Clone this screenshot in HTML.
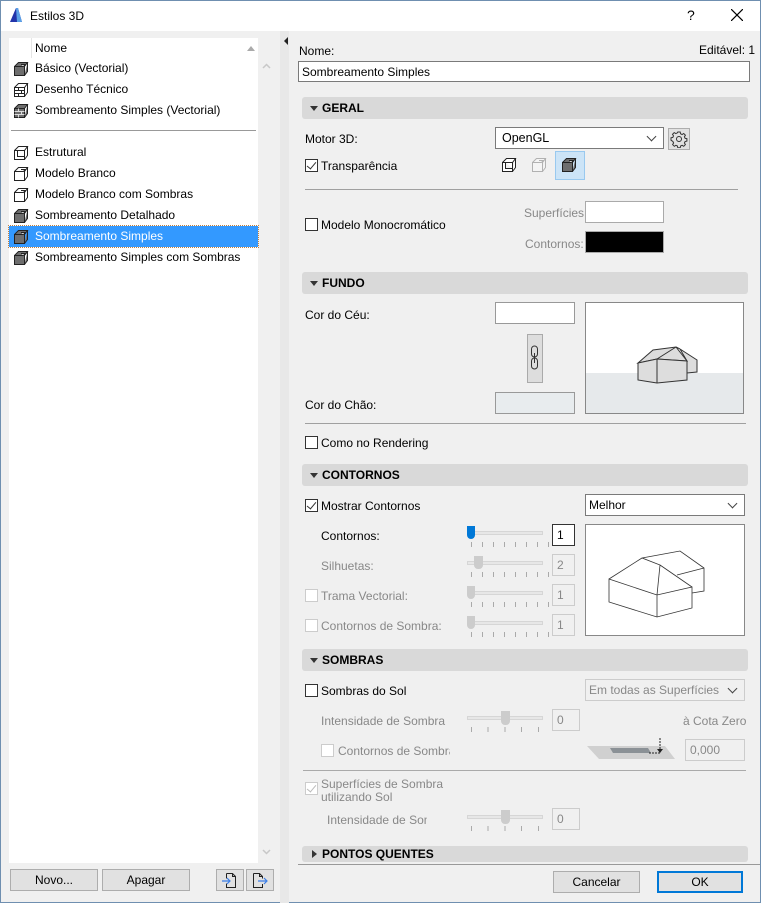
<!DOCTYPE html>
<html><head><meta charset="utf-8">
<style>
*{box-sizing:border-box;margin:0;padding:0}
body{width:761px;height:903px;background:#f0f0f0;font-family:"Liberation Sans",sans-serif;font-size:12px;color:#000;position:relative;overflow:hidden}
.a{position:absolute;white-space:nowrap}
.win{position:absolute;left:0;top:0;width:761px;height:903px;border:1px solid #6f8fb0;}
.title{position:absolute;left:1px;top:1px;width:759px;height:30px;background:#fff}
.list{position:absolute;left:9px;top:38px;width:249px;height:825px;background:#fff}
.row{position:absolute;left:0;width:249px;height:21px;line-height:21px;padding-left:26px}
.row svg{position:absolute;left:4px;top:3px}
.sel{background:#3399ff;color:#fff;outline:1px dotted #c08040}
.hdr{position:absolute;left:302px;width:446px;height:22px;background:#d9d9d9;border-radius:3px;font-weight:bold;line-height:22px;padding-left:20px}
.hdr:before{content:"";position:absolute;left:8px;top:9px;border-left:4px solid transparent;border-right:4px solid transparent;border-top:5px solid #333}
.hdr.c:before{left:10px;top:4px;border-top:4px solid transparent;border-bottom:4px solid transparent;border-left:5px solid #333;border-right:0}
.cb{position:absolute;width:13px;height:13px;border:1px solid #333;background:#fff}
.cb.d{border-color:#ccc}
.cb.k:after{content:"";position:absolute;left:3px;top:0px;width:4px;height:8px;border:solid #333;border-width:0 1.5px 1.5px 0;transform:rotate(40deg)}
.cb.kd:after{border-color:#bbb}
.box{position:absolute;background:#fff;border:1px solid #7a7a7a}
.box.d{background:#f0f0f0;border-color:#ccc;color:#888}
.btn{position:absolute;background:#e1e1e1;border:1px solid #adadad;text-align:center;line-height:20px}
.g{color:#888}
.sl{position:absolute;height:4px;background:#e7e7e7;border:1px solid #d6d6d6}
.ticks{position:absolute;height:5px;background:repeating-linear-gradient(90deg,#aaa 0 1px,transparent 1px 11px)}
.hr{position:absolute;height:1px;background:#a0a0a0}
.dd:after{content:"";position:absolute;right:8px;top:5px;width:6px;height:6px;border:solid #444;border-width:0 1px 1px 0;transform:rotate(45deg)}
</style></head><body>
<svg width="0" height="0" style="position:absolute">
<defs>
<symbol id="cube" viewBox="0 0 16 16"><path d="M1.5 5.5h10v9h-10z M1.5 5.5l4-4h9l-3 4 M14.5 1.5v9l-3 4" fill="#6e6e6e" stroke="#222" stroke-width="1"/><path d="M8 3.5h4l-1.5 2" fill="#fff" stroke="#222"/></symbol>
<symbol id="cubew" viewBox="0 0 16 16"><path d="M1.5 5.5h10v9h-10z M1.5 5.5l4-4h9l-3 4 M14.5 1.5v9l-3 4" fill="#fff" stroke="#222" stroke-width="1"/><path d="M8 3.5h4l-1.5 2" fill="#fff" stroke="#222"/></symbol>
<symbol id="brick" viewBox="0 0 16 16"><path d="M1.5 5.5h10v9h-10z M1.5 5.5l4-4h9l-3 4 M14.5 1.5v9l-3 4 M1.5 8.5h10M1.5 11.5h10M5.5 5.5v3M8.5 8.5v3M5.5 11.5v3" fill="none" stroke="#222"/></symbol>
<symbol id="brickf" viewBox="0 0 16 16"><path d="M1.5 5.5h10v9h-10z M1.5 5.5l4-4h9l-3 4 M14.5 1.5v9l-3 4" fill="#6e6e6e" stroke="#222"/><path d="M1.5 8.5h10M1.5 11.5h10M5.5 5.5v3M8.5 8.5v3M5.5 11.5v3" stroke="#ddd"/></symbol>
<symbol id="struct" viewBox="0 0 16 16"><path d="M1.5 5.5h10v9h-10z M1.5 5.5l4-4h9l-3 4 M14.5 1.5v9l-3 4 M4.5 5.5v6h7" fill="#fff" stroke="#222"/></symbol>
</defs></svg>
<div class="win"></div>
<div class="title"></div>
<svg class="a" style="left:8px;top:7px" width="16" height="16"><rect width="16" height="16" fill="#fff"/><path d="M2 15L8 1h2l4 14z" fill="#2233aa"/><path d="M8 1h2l4 14H9z" fill="#5aa0e6"/></svg>
<div class="a" style="left:30px;top:9px;font-size:12px">Estilos 3D</div>
<div class="a" style="left:687px;top:7px;font-size:14px">?</div>
<svg class="a" style="left:731px;top:9px" width="12" height="12"><path d="M0 0L12 12M12 0L0 12" stroke="#000" stroke-width="1.2"/></svg>

<div class="list">
<div class="a" style="left:22px;top:0;width:1px;height:20px;background:#e5e5e5"></div>
<div class="a" style="left:26px;top:3px">Nome</div>
<div class="a" style="left:238px;top:8px;border-left:4px solid transparent;border-right:4px solid transparent;border-bottom:5px solid #aaa"></div>
<div class="row" style="top:20px"><svg width="16" height="16"><use href="#cube"/></svg>Básico (Vectorial)</div>
<div class="row" style="top:41px"><svg width="16" height="16"><use href="#brick"/></svg>Desenho Técnico</div>
<div class="row" style="top:62px"><svg width="16" height="16"><use href="#brickf"/></svg>Sombreamento Simples (Vectorial)</div>
<div class="a" style="left:2px;top:92px;width:245px;height:1px;background:#999"></div>
<div class="row" style="top:104px"><svg width="16" height="16"><use href="#struct"/></svg>Estrutural</div>
<div class="row" style="top:125px"><svg width="16" height="16"><use href="#cubew"/></svg>Modelo Branco</div>
<div class="row" style="top:146px"><svg width="16" height="16"><use href="#cubew"/></svg>Modelo Branco com Sombras</div>
<div class="row" style="top:167px"><svg width="16" height="16"><use href="#cube"/></svg>Sombreamento Detalhado</div>
<div class="row sel" style="top:188px"><svg width="16" height="16"><use href="#cube"/></svg>Sombreamento Simples</div>
<div class="row" style="top:209px"><svg width="16" height="16"><use href="#cube"/></svg>Sombreamento Simples com Sombras</div>
</div>
<svg class="a" style="left:262px;top:63px" width="9" height="6"><path d="M1 5l3.5-3.5L8 5" fill="none" stroke="#c8c8c8" stroke-width="1.5"/></svg>
<svg class="a" style="left:262px;top:849px" width="9" height="6"><path d="M1 1l3.5 3.5L8 1" fill="none" stroke="#c8c8c8" stroke-width="1.5"/></svg>
<div class="btn" style="left:10px;top:869px;width:88px;height:22px">Novo...</div>
<div class="btn" style="left:102px;top:869px;width:88px;height:22px">Apagar</div>
<div class="btn" style="left:216px;top:869px;width:28px;height:22px"><svg width="18" height="18" style="margin-top:1px"><path d="M5.5 2.5h6l3 3v11h-9v-4M5.5 7.5v-5M11.5 2.5v3h3" fill="none" stroke="#222"/><path d="M1 10h8M6 7l3 3-3 3" fill="none" stroke="#3a7ee8" stroke-width="1.2"/></svg></div>
<div class="btn" style="left:246px;top:869px;width:28px;height:22px"><svg width="18" height="18" style="margin-top:1px"><path d="M2.5 2.5h6l3 3v2M11.5 13v3.5h-9v-14M8.5 2.5v3h3" fill="none" stroke="#222"/><path d="M7 10h9M13 7l3 3-3 3" fill="none" stroke="#3a7ee8" stroke-width="1.2"/></svg></div>

<div class="a" style="left:280px;top:31px;width:9px;height:872px;background:#e8e8e8"></div>
<div class="a" style="left:284px;top:37px;border-top:4px solid transparent;border-bottom:4px solid transparent;border-right:4px solid #222"></div>

<div class="a" style="left:299px;top:44px">Nome:</div>
<div class="a" style="left:699px;top:43px">Editável: 1</div>
<div class="box" style="left:298px;top:61px;width:452px;height:21px;padding:3px 3px">Sombreamento Simples</div>

<div class="hdr" style="top:97px">GERAL</div>
<div class="a" style="left:305px;top:132px">Motor 3D:</div>
<div class="box dd" style="left:495px;top:127px;width:169px;height:22px;padding:3px 6px;font-size:12.5px">OpenGL</div>
<div class="btn" style="left:668px;top:128px;width:22px;height:22px"><svg width="18" height="18" style="margin-top:1px" viewBox="0 0 18 18"><circle cx="9" cy="9" r="2.5" fill="none" stroke="#333"/><path d="M7.8 2h2.4l.4 1.8 1.5.7 1.6-1 1.7 1.7-1 1.6.7 1.5 1.8.4v2.4l-1.8.4-.7 1.5 1 1.6-1.7 1.7-1.6-1-1.5.7-.4 1.8H7.8l-.4-1.8-1.5-.7-1.6 1-1.7-1.7 1-1.6-.7-1.5L1 10.2V7.8l1.8-.4.7-1.5-1-1.6 1.7-1.7 1.6 1 1.5-.7z" fill="none" stroke="#333"/></svg></div>
<div class="cb k" style="left:305px;top:159px"></div>
<div class="a" style="left:321px;top:159px">Transparência</div>
<svg class="a" style="left:501px;top:157px" width="16" height="16"><use href="#struct"/></svg>
<svg class="a" style="left:531px;top:157px;opacity:.3" width="16" height="16"><use href="#cubew"/></svg>
<div class="a" style="left:555px;top:151px;width:30px;height:29px;background:#cce4f7;border:1px solid #99c9ef"></div>
<svg class="a" style="left:561px;top:157px" width="16" height="16"><use href="#cube"/></svg>
<div class="hr" style="left:305px;top:189px;width:433px"></div>
<div class="cb" style="left:305px;top:218px"></div>
<div class="a" style="left:321px;top:218px">Modelo Monocromático</div>
<div class="a g" style="left:524px;top:206px">Superfícies:</div>
<div class="box" style="left:585px;top:201px;width:79px;height:22px;border-color:#aaa"></div>
<div class="a g" style="left:525px;top:237px">Contornos:</div>
<div class="box" style="left:585px;top:231px;width:79px;height:22px;background:#000;border-color:#aaa"></div>

<div class="hdr" style="top:272px">FUNDO</div>
<div class="a" style="left:305px;top:308px">Cor do Céu:</div>
<div class="box" style="left:495px;top:302px;width:80px;height:22px;border-color:#999"></div>
<div class="a" style="left:527px;top:334px;width:16px;height:49px;background:#ddd;border:1px solid #aaa"></div>
<svg class="a" style="left:530px;top:345px" width="10" height="26"><rect x="1.5" y="1" width="6" height="11" rx="3" fill="none" stroke="#333"/><rect x="1.5" y="13" width="6" height="11" rx="3" fill="none" stroke="#333"/><path d="M4.5 8v10" stroke="#333"/></svg>
<div class="a" style="left:305px;top:398px">Cor do Chão:</div>
<div class="box" style="left:495px;top:392px;width:80px;height:22px;background:#e8ecee;border-color:#999"></div>
<div class="box" style="left:585px;top:302px;width:159px;height:112px;border-color:#888"></div>
<div class="a" style="left:586px;top:373px;width:157px;height:40px;background:#e6e9eb"></div>
<svg class="a" style="left:635px;top:345px" width="65" height="40"><path d="M45 4l17 11v12l-10 1V16z" fill="#ddd" stroke="#333"/><path d="M3 18L18 5 41 2 52 16 22 14z" fill="#ddd" stroke="#333"/><path d="M41 2L22 14M41 2l4 2" fill="none" stroke="#333"/><path d="M3 18l19-4 30 2v19l-30 3-19-3z" fill="#ddd" stroke="#333"/><path d="M22 14v24" stroke="#333"/></svg>

<div class="hr" style="left:305px;top:423px;width:441px"></div>
<div class="cb" style="left:305px;top:436px"></div>
<div class="a" style="left:321px;top:436px">Como no Rendering</div>

<div class="hdr" style="top:464px">CONTORNOS</div>
<div class="cb k" style="left:305px;top:499px"></div>
<div class="a" style="left:321px;top:499px">Mostrar Contornos</div>
<div class="box dd" style="left:585px;top:494px;width:160px;height:22px;padding:3px 3px">Melhor</div>
<div class="a" style="left:321px;top:529px">Contornos:</div>
<div class="sl" style="left:467px;top:531px;width:76px"></div>
<div class="a" style="left:467px;top:526px;width:8px;height:13px;background:#0078d7;border-radius:0 0 4px 4px"></div>
<div class="ticks" style="left:471px;top:542px;width:80px"></div>
<div class="box" style="left:552px;top:524px;width:23px;height:22px;padding:3px 4px;border-color:#333">1</div>
<div class="a g" style="left:321px;top:559px">Silhuetas:</div>
<div class="sl" style="left:467px;top:561px;width:76px"></div>
<div class="a" style="left:474px;top:556px;width:9px;height:13px;background:#ccc;border-radius:0 0 4px 4px"></div>
<div class="ticks" style="left:471px;top:572px;width:80px"></div>
<div class="box d" style="left:552px;top:554px;width:23px;height:22px;padding:3px 4px">2</div>
<div class="cb d" style="left:305px;top:589px"></div>
<div class="a g" style="left:321px;top:589px">Trama Vectorial:</div>
<div class="sl" style="left:467px;top:591px;width:76px"></div>
<div class="a" style="left:467px;top:586px;width:8px;height:13px;background:#ccc;border-radius:0 0 4px 4px"></div>
<div class="ticks" style="left:471px;top:602px;width:80px"></div>
<div class="box d" style="left:552px;top:584px;width:23px;height:22px;padding:3px 4px">1</div>
<div class="cb d" style="left:305px;top:619px"></div>
<div class="a g" style="left:321px;top:619px">Contornos de Sombra:</div>
<div class="sl" style="left:467px;top:621px;width:76px"></div>
<div class="a" style="left:467px;top:616px;width:8px;height:13px;background:#ccc;border-radius:0 0 4px 4px"></div>
<div class="ticks" style="left:471px;top:632px;width:80px"></div>
<div class="box d" style="left:552px;top:614px;width:23px;height:22px;padding:3px 4px">1</div>
<div class="box" style="left:585px;top:524px;width:160px;height:112px;border-color:#888"></div>
<svg class="a" style="left:605px;top:545px" width="110" height="80"><path d="M4 34l48 16 35-8v21l-35 9-48-15z M52 50v22 M4 34L37 13l18 7-3 30 M55 20l32 22 M37 13l38-7 24 17v23l-12 2 M72 30l27-7" fill="none" stroke="#333" stroke-width=".8"/></svg>

<div class="hdr" style="top:649px">SOMBRAS</div>
<div class="cb" style="left:305px;top:684px"></div>
<div class="a" style="left:321px;top:684px">Sombras do Sol</div>
<div class="box d dd" style="left:585px;top:679px;width:160px;height:22px;padding:3px 3px">Em todas as Superfícies</div>
<div class="a g" style="left:321px;top:714px;width:128px;overflow:hidden">Intensidade de Sombra Projetada</div>
<div class="sl" style="left:467px;top:716px;width:76px"></div>
<div class="a" style="left:501px;top:711px;width:9px;height:14px;background:#ccc;border-radius:0 0 4px 4px"></div>
<div class="ticks" style="left:471px;top:727px;width:80px;background:repeating-linear-gradient(90deg,#aaa 0 1px,transparent 1px 16.7px)"></div>
<div class="box d" style="left:552px;top:709px;width:28px;height:22px;padding:3px 4px">0</div>
<div class="a g" style="left:683px;top:714px">à Cota Zero</div>
<div class="cb d" style="left:321px;top:744px"></div>
<div class="a g" style="left:338px;top:744px;width:112px;overflow:hidden">Contornos de Sombra</div>
<svg class="a" style="left:587px;top:738px" width="90" height="26"><path d="M0 8h78l10 13H12z" fill="#d0d0d0"/><path d="M23 10h38l3 5H26z" fill="#8b9196"/><path d="M73 0v14" stroke="#222" stroke-dasharray="2 1"/><path d="M70 11l3 4 3-4" fill="#222"/><path d="M62 15h11" stroke="#222" stroke-dasharray="2 1"/></svg>
<div class="box d" style="left:685px;top:739px;width:60px;height:22px;padding:3px 4px">0,000</div>
<div class="hr" style="left:303px;top:770px;width:443px;background:#aaa"></div>
<div class="cb d k kd" style="left:305px;top:782px"></div>
<div class="a g" style="left:321px;top:778px;line-height:13px">Superfícies de Sombra<br>utilizando Sol</div>
<div class="a g" style="left:327px;top:813px;width:100px;overflow:hidden">Intensidade de Sombra</div>
<div class="sl" style="left:467px;top:815px;width:76px"></div>
<div class="a" style="left:501px;top:810px;width:9px;height:14px;background:#ccc;border-radius:0 0 4px 4px"></div>
<div class="ticks" style="left:471px;top:826px;width:80px;background:repeating-linear-gradient(90deg,#aaa 0 1px,transparent 1px 16.7px)"></div>
<div class="box d" style="left:552px;top:808px;width:28px;height:22px;padding:3px 4px">0</div>

<div class="hdr c" style="top:846px;height:16px;line-height:16px">PONTOS QUENTES</div>
<div class="hr" style="left:298px;top:864px;width:462px;background:#999"></div>
<div class="btn" style="left:553px;top:871px;width:87px;height:22px">Cancelar</div>
<div class="btn" style="left:657px;top:871px;width:86px;height:22px;border:2px solid #0078d7;line-height:18px">OK</div>
</body></html>
